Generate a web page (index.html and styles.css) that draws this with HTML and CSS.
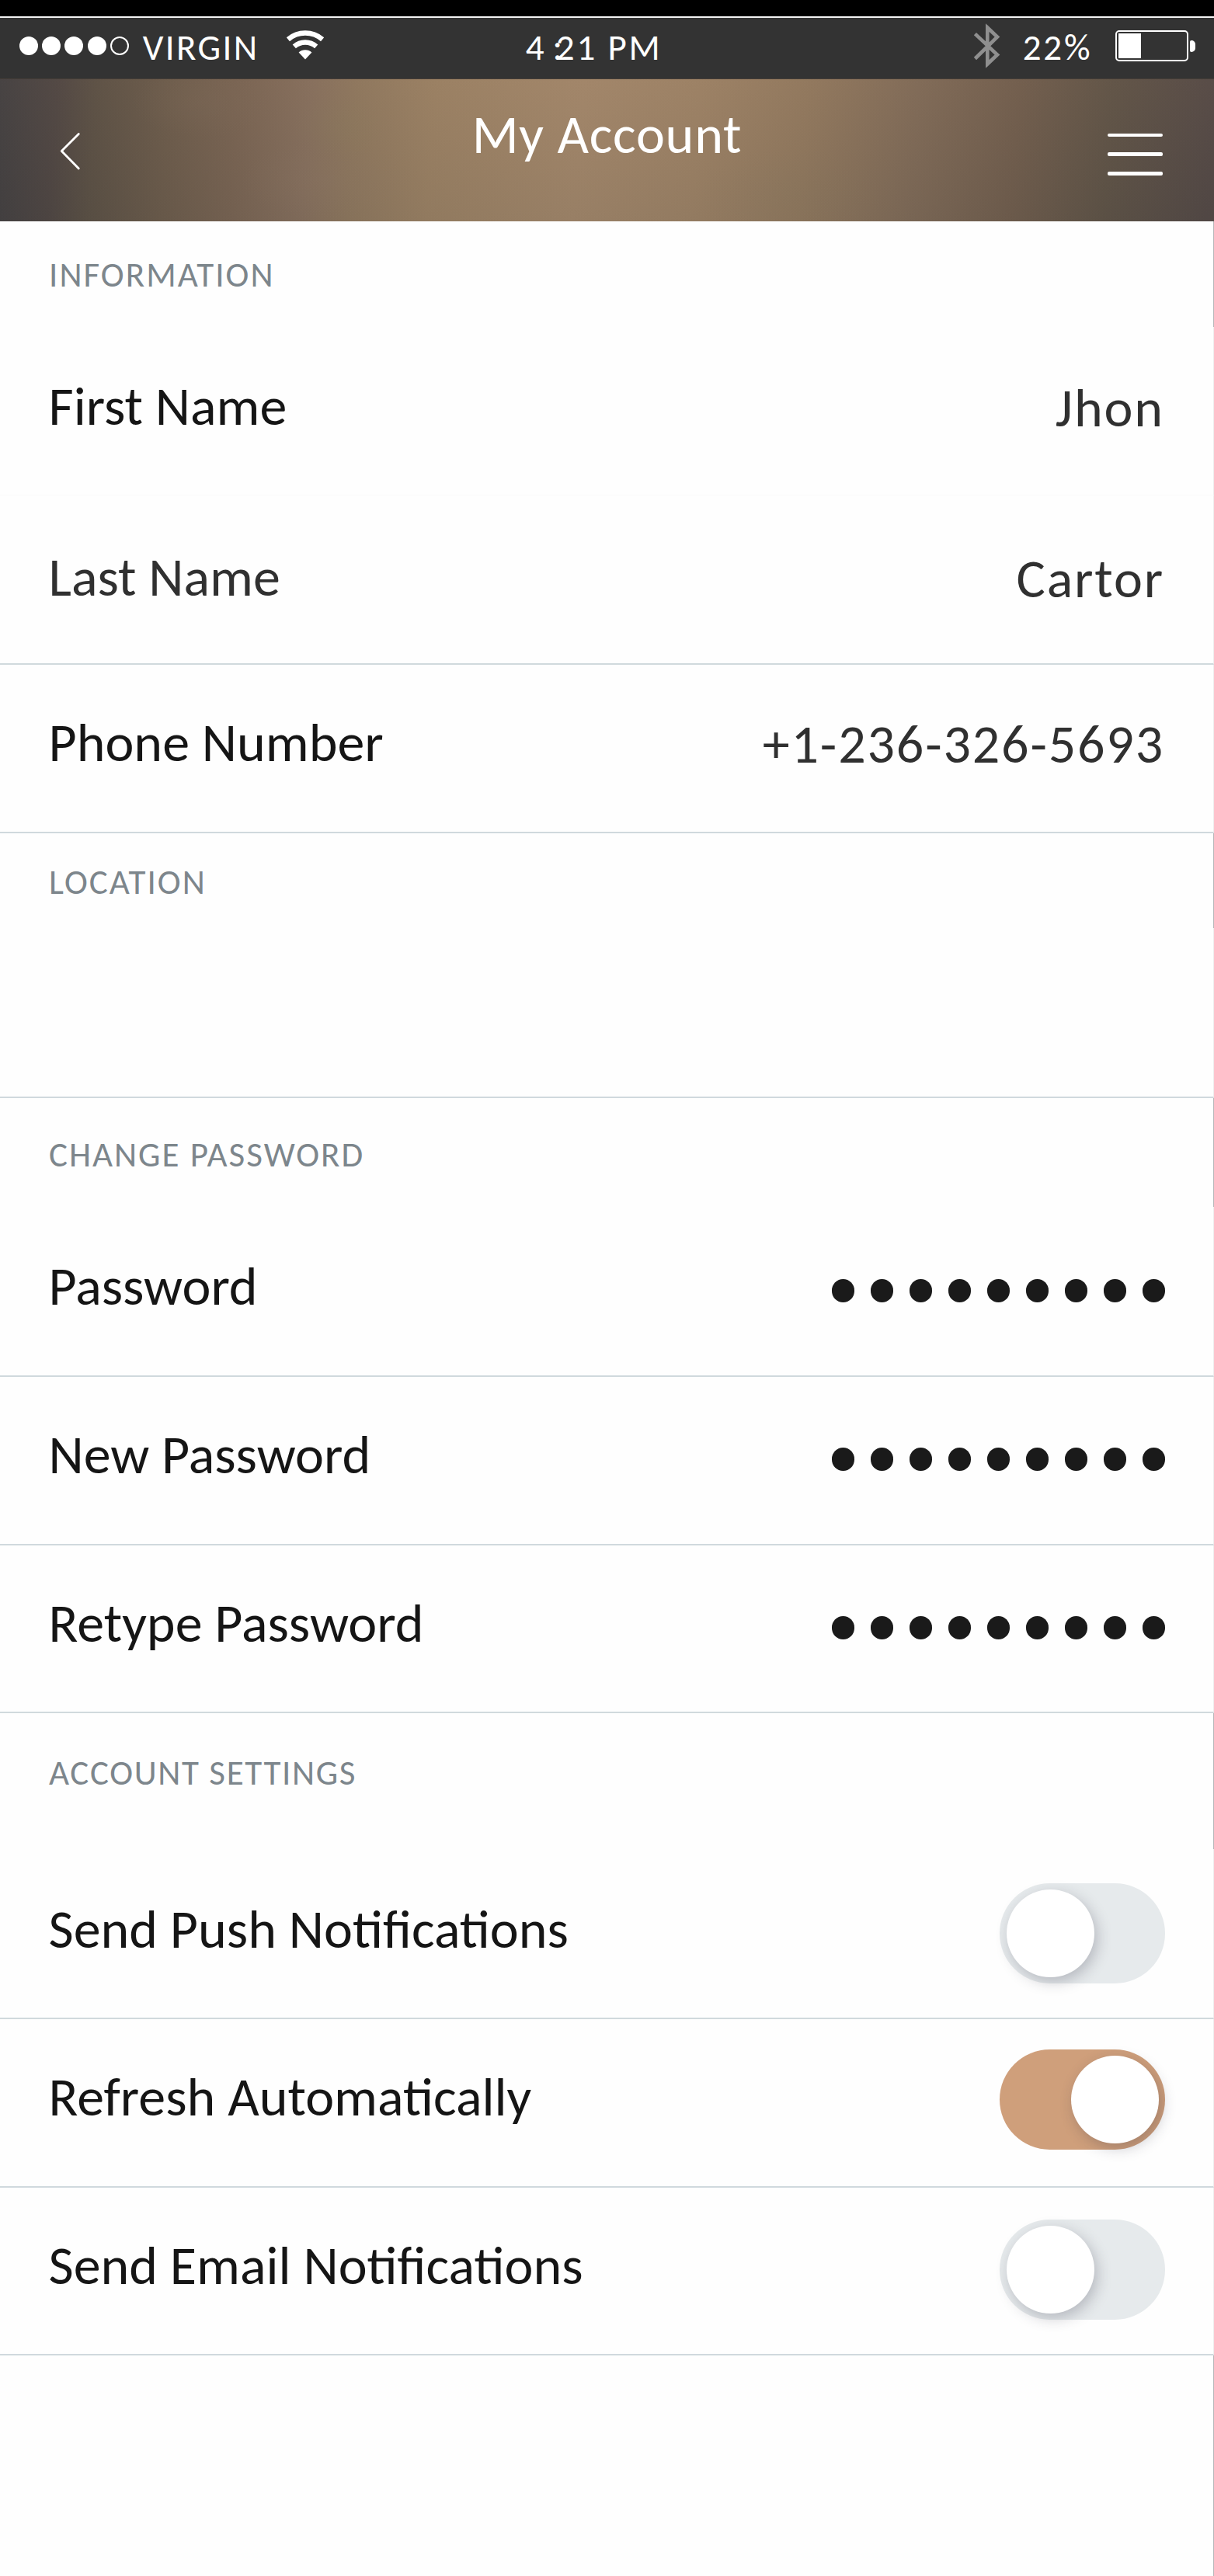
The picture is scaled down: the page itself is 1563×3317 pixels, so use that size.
FILE: index.html
```html
<!DOCTYPE html>
<html lang="en">
<head>
<meta charset="utf-8">
<title>My Account</title>
<link rel="stylesheet" href="styles.css">
</head>
<body>
<div class="bezel"></div>
<div class="status">
  <div class="signal"><i></i><i></i><i></i><i></i><i class="off"></i></div>
  <span class="carrier">VIRGIN</span>
  <svg class="wifi" width="50" height="40" viewBox="0 0 50 40" fill="none" stroke="#fff" stroke-width="6.4">
    <path d="M2.9 12.7 A34 34 0 0 1 47.1 12.7"/>
    <path d="M10.8 21.9 A21.5 21.5 0 0 1 39.2 21.9"/>
    <path d="M25 38.6 L16.6 29.4 A12.5 12.5 0 0 1 33.4 29.4 Z" fill="#fff" stroke="none"/>
  </svg>
  <span class="time"><span>4</span><span class="colon">:</span><span>21 PM</span></span>
  <svg class="bluetooth" width="36" height="58" viewBox="0 0 36 58" fill="none" stroke="#8f8f8f" stroke-width="4.600">
    <path d="M2.4 13.6 L31 40.500 L18.300 52.500 V5.500 L31 17.500 L2.400 45.500"/>
  </svg>
  <span class="percent">22%</span>
  <div class="battery"><div class="cell"><div class="charge" style="width:29px"></div></div><div class="tip"></div></div>
</div>
<header class="bar">
  <svg class="back" width="28" height="50" viewBox="0 0 28 50" fill="none" stroke="#fff" stroke-width="2.8" stroke-linecap="round" stroke-linejoin="round"><path d="M24.300 3.500 L2.300 25.500 L24.300 48"/></svg>
  <h1>My Account</h1>
  <div class="menu"><i></i><i></i><i></i></div>
</header>
<main>
  <h2 class="t-info">Information</h2>
  <div class="row first bare"><span class="label">First Name</span><span class="value">Jhon</span></div>
  <div class="row last"><span class="label soft">Last Name</span><span class="value">Cartor</span></div>
  <div class="row"><span class="label">Phone Number</span><span class="value">+1-236-326-5693</span></div>

  <h2 class="t-location">Location</h2>
  <div class="row empty"></div>

  <h2 class="t-password">Change Password</h2>
  <div class="row first tall"><span class="label">Password</span><span class="dots"><i></i><i></i><i></i><i></i><i></i><i></i><i></i><i></i><i></i></span></div>
  <div class="row"><span class="label">New Password</span><span class="dots"><i></i><i></i><i></i><i></i><i></i><i></i><i></i><i></i><i></i></span></div>
  <div class="row short"><span class="label">Retype Password</span><span class="dots"><i></i><i></i><i></i><i></i><i></i><i></i><i></i><i></i><i></i></span></div>

  <h2 class="t-settings">Account Settings</h2>
  <div class="row push"><span class="label">Send Push Notifications</span><span class="toggle"><i></i></span></div>
  <div class="row refresh"><span class="label">Refresh Automatically</span><span class="toggle on"><i></i></span></div>
  <div class="row email"><span class="label">Send Email Notifications</span><span class="toggle"><i></i></span></div>
  <div class="rest"></div>
</main>
</body>
</html>
```
FILE: styles.css
```css
* { box-sizing: border-box; }
body {
  margin: 0;
  width: 1563px;
  height: 3317px;
  display: flex;
  flex-direction: column;
  background: #fefefe;
  color: #151515;
  font-family: Carlito, Calibri, Lato, sans-serif;
  overflow: hidden;
}
h1, h2 { margin: 0; font-weight: 400; }

.bezel { height: 23px; background: #000; border-bottom: 2px solid #f4f4f4; }

/* status bar */
.status {
  height: 79px;
  display: flex;
  align-items: flex-start;
  background: #333;
  border-bottom: 1px solid #453d37;
  color: #fff;
  font-size: 47px;
  line-height: 50px;
  letter-spacing: 2.8px;
  white-space: nowrap;
}
.signal { display: flex; gap: 5.200px; margin: 24px 0 0 25px; }
.signal i { width: 24px; height: 24px; border-radius: 50%; background: #fff; }
.signal .off { background: none; border: 2px solid #fff; }
.carrier { width: 160px; margin: 13px 0 0 18px; letter-spacing: 2.4px; }
.wifi { margin: 15px 0 0 24px; }
.time { display: flex; width: 190px; margin: 13px 0 0 259px; }
.time .colon { margin-left: 8px; margin-right: -11px; }
.bluetooth { margin: 7px 0 0 386px; }
.percent { width: 100px; margin: 13px 0 0 28px; }
.battery { display: flex; align-items: center; gap: 2px; margin: 16px 0 0 19px; }
.cell { width: 94px; height: 40px; padding: 2px; border: 2px solid #fff; border-radius: 5px; }
.charge { height: 32px; background: #fff; }
.tip { width: 7px; height: 15px; background: #fff; border-radius: 2px 5px 5px 2px; }

/* title bar */
.bar {
  height: 183px;
  display: flex;
  justify-content: space-between;
  align-items: flex-start;
  padding: 0 66px 0 77px;
  color: #fff;
  background:
    radial-gradient(90px 45px at 260px 30px, rgba(130,110,92,.2), transparent),
    radial-gradient(110px 50px at 420px 130px, rgba(140,118,100,.2), transparent),
    radial-gradient(60px 40px at 435px 60px, rgba(135,125,90,.15), transparent),
    radial-gradient(120px 60px at 1020px 150px, rgba(128,116,92,.15), transparent),
    linear-gradient(180deg, rgba(185,150,120,.12), rgba(110,98,84,.15)),
    linear-gradient(94deg, #38383c 0, #463f3e 75px, #534a40 125px, #655647 220px, #735f4f 310px, #816b5a 400px, #8a745b 460px, #977e61 560px, #9f8468 750px, #997f63 900px, #8d755b 1040px, #7a6654 1180px, #6a5849 1310px, #574d42 1430px, #4b4241 1563px);
}
.back { margin-top: 67px; }
.bar h1 { width: 400px; margin: 19px 0 0 26px; padding-left: 6px; text-align: center; font-size: 70px; line-height: 104px; letter-spacing: .8px; }
.menu { display: flex; flex-direction: column; gap: 20.300px; margin-top: 69.500px; }
.menu i { width: 71px; height: 4.600px; border-radius: 2px; background: #fff; }

/* sections */
main { flex: 1; display: flex; flex-direction: column; }
h2 {
  padding-left: 63px;
  border-right: 1.500px solid #b4b6b8;
  color: #7d868c;
  font-size: 45px;
  line-height: 50px;
  letter-spacing: 2.050px;
  text-transform: uppercase;
}
.t-info { height: 136px; padding-top: 44px; }
.t-location { height: 122px; padding-top: 38px; }
.t-password { height: 140px; padding-top: 48px; letter-spacing: 2px; }
.t-settings { height: 175px; padding-top: 52px; letter-spacing: 1.650px; }

.row {
  --label: 64.500px;
  --control: 41px;
  height: 217px;
  display: flex;
  justify-content: space-between;
  align-items: flex-start;
  padding: 0 62px 0 62.500px;
  border-right: 1px solid #efefef;
  border-bottom: 2px solid #d0d9dd;
  white-space: nowrap;
}
.first { --label: 66.500px; }
.bare { border-bottom: 1px solid #fafafa; }
.last { --label: 69.500px; height: 218px; }
.empty { height: 219px; }
.tall { height: 219px; }
.short { height: 216px; }
.push { --label: 68px; --control: 44px; height: 219px; }
.refresh { --label: 65px; --control: 38.500px; }
.email { --label: 65px; height: 216px; }
.rest { flex: 1; border-right: 1px solid #b4b6b8; }

.label, .value { font-size: 70px; line-height: 70px; }
.label { margin-top: var(--label); }
.soft { color: #303030; }
.value { margin: calc(var(--label) + 2px) 1px 0 0; color: #303030; letter-spacing: 1.850px; }

.dots { display: flex; gap: 20.500px; margin-top: calc(var(--label) + 26.500px); }
.dots i { width: 29.500px; height: 29.500px; border-radius: 50%; background: #1a1a1a; }

.toggle { width: 213px; height: 129px; margin-top: var(--control); padding: 8px 8px 8px 9px; display: flex; border-radius: 65px; background: #e6eaec; }
.toggle i { width: 113px; height: 113px; border-radius: 50%; background: #fff; box-shadow: 4px 6px 18px rgba(40,40,60,.25); }
.toggle.on { justify-content: flex-end; background: #cf9f7b; }
```
